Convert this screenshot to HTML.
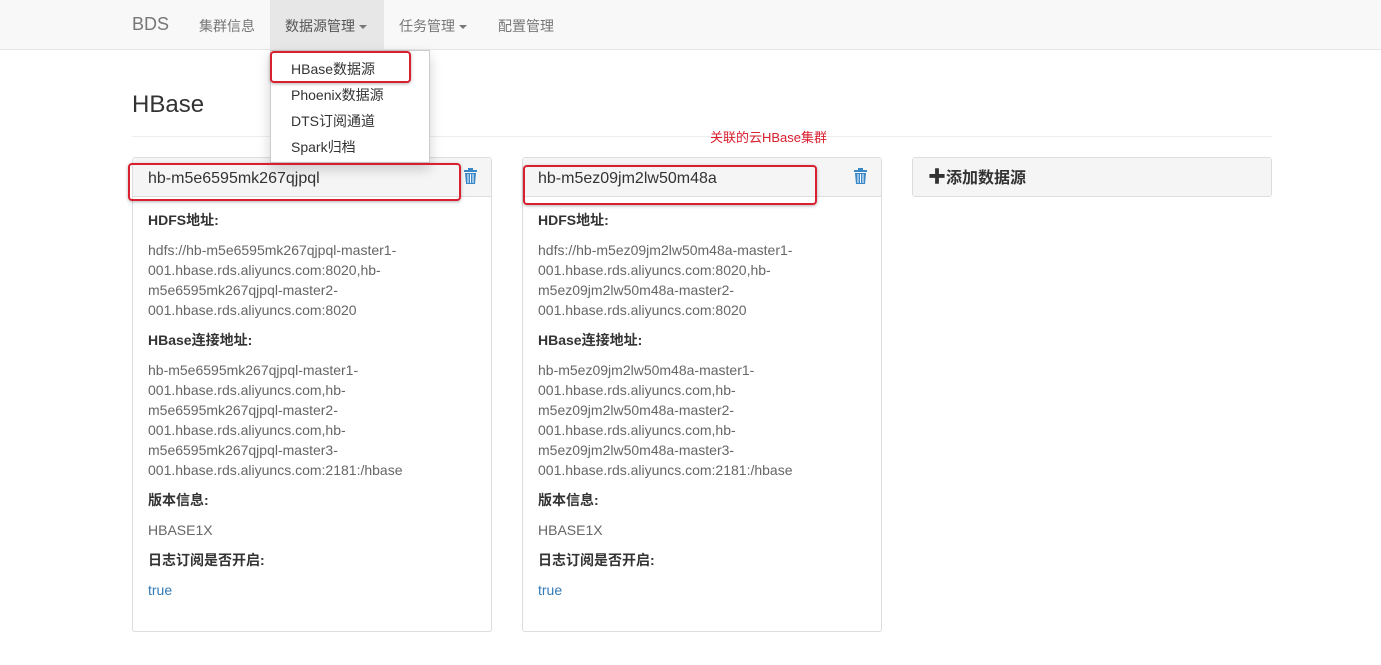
<!DOCTYPE html>
<html><head><meta charset="utf-8"><style>
*{box-sizing:border-box;margin:0;padding:0}
body{width:1381px;height:665px;background:#fff;font-family:"Liberation Sans","Noto Sans CJK SC",sans-serif;font-size:14px;color:#333;position:relative;overflow:hidden}
.nav{position:absolute;left:0;top:0;width:1381px;height:50px;background:#f8f8f8;border-bottom:1px solid #e7e7e7}
.nav span{position:absolute;top:16px;color:#777;font-size:14px}
.brand{font-size:18px!important;top:14px!important}
.act{position:absolute;left:270px;top:0;width:114px;height:50px;background:#e7e7e7}
.caret{display:inline-block;width:0;height:0;border-left:4px solid transparent;border-right:4px solid transparent;border-top:4px solid #777;vertical-align:middle;margin-left:4px}
.dd{position:absolute;z-index:10;left:270px;top:50px;width:160px;height:113px;background:#fff;border:1px solid #ccc;box-shadow:0 6px 12px rgba(0,0,0,.18)}
.dd div{position:absolute;left:20px;font-size:14px;color:#333}
h1{position:absolute;left:132px;top:91px;font-size:24px;font-weight:500;color:#333}
.hr{position:absolute;left:132px;top:136px;width:1140px;height:1px;background:#eee}
.panel{position:absolute;top:157px;width:360px;border:1px solid #ddd;border-radius:3px;background:#fff}
.ph{height:39px;background:#f5f5f5;border-bottom:1px solid #ddd;padding:12px 15px 0;font-size:16px;position:relative}
.trash{position:absolute;right:14px;top:10px}
.pb{padding:13px 15px 0;font-size:14px;line-height:20px}
.lb{font-weight:bold;margin-bottom:10px}
.v{color:#666;margin-bottom:10px}
.t{color:#337ab7}
.red{position:absolute;z-index:20;border:2px solid #d9202f;border-radius:4px;box-shadow:0 1px 3px rgba(0,0,0,.3)}
</style></head><body>
<div class="nav">
<div class="act"></div>
<span class="brand" style="left:132px">BDS</span>
<span style="left:199px">集群信息</span>
<span style="left:285px;color:#555">数据源管理<i class="caret"></i></span>
<span style="left:399px">任务管理<i class="caret"></i></span>
<span style="left:498px">配置管理</span>
</div>
<div class="dd">
<div style="top:8px">HBase数据源</div>
<div style="top:34px">Phoenix数据源</div>
<div style="top:60px">DTS订阅通道</div>
<div style="top:86px">Spark归档</div>
</div>
<h1>HBase</h1>
<div class="hr"></div>
<div style="position:absolute;left:710px;top:127px;color:#d9202f;font-size:13px">关联的云HBase集群</div>
<div class="panel" style="left:132px;height:475px">
<div class="ph">hb-m5e6595mk267qjpql<svg class="trash" width="13" height="16" viewBox="0 0 13 16"><rect x="0" y="2" width="13" height="2" fill="#3a87c8"/><rect x="4" y="0" width="5" height="2" fill="#3a87c8"/><path d="M1 5h11l-1 11H2z" fill="#3a87c8"/><path d="M4 6v9M6.5 6v9M9 6v9" stroke="#fff" stroke-width="1"/></svg></div>
<div class="pb">
<div class="lb">HDFS地址:</div>
<div class="v">hdfs://hb-m5e6595mk267qjpql-master1-<br>001.hbase.rds.aliyuncs.com:8020,hb-<br>m5e6595mk267qjpql-master2-<br>001.hbase.rds.aliyuncs.com:8020</div>
<div class="lb">HBase连接地址:</div>
<div class="v">hb-m5e6595mk267qjpql-master1-<br>001.hbase.rds.aliyuncs.com,hb-<br>m5e6595mk267qjpql-master2-<br>001.hbase.rds.aliyuncs.com,hb-<br>m5e6595mk267qjpql-master3-<br>001.hbase.rds.aliyuncs.com:2181:/hbase</div>
<div class="lb">版本信息:</div>
<div class="v">HBASE1X</div>
<div class="lb">日志订阅是否开启:</div>
<div class="t">true</div>
</div></div>
<div class="panel" style="left:522px;height:475px">
<div class="ph">hb-m5ez09jm2lw50m48a<svg class="trash" width="13" height="16" viewBox="0 0 13 16"><rect x="0" y="2" width="13" height="2" fill="#3a87c8"/><rect x="4" y="0" width="5" height="2" fill="#3a87c8"/><path d="M1 5h11l-1 11H2z" fill="#3a87c8"/><path d="M4 6v9M6.5 6v9M9 6v9" stroke="#fff" stroke-width="1"/></svg></div>
<div class="pb">
<div class="lb">HDFS地址:</div>
<div class="v">hdfs://hb-m5ez09jm2lw50m48a-master1-<br>001.hbase.rds.aliyuncs.com:8020,hb-<br>m5ez09jm2lw50m48a-master2-<br>001.hbase.rds.aliyuncs.com:8020</div>
<div class="lb">HBase连接地址:</div>
<div class="v">hb-m5ez09jm2lw50m48a-master1-<br>001.hbase.rds.aliyuncs.com,hb-<br>m5ez09jm2lw50m48a-master2-<br>001.hbase.rds.aliyuncs.com,hb-<br>m5ez09jm2lw50m48a-master3-<br>001.hbase.rds.aliyuncs.com:2181:/hbase</div>
<div class="lb">版本信息:</div>
<div class="v">HBASE1X</div>
<div class="lb">日志订阅是否开启:</div>
<div class="t">true</div>
</div></div>
<div class="panel" style="left:912px;height:40px">
<div class="ph" style="border-bottom:none;font-weight:bold;padding:5px 15px 0;height:38px"><span style="font-size:18px">✚</span>添加数据源</div>
</div>
<div class="red" style="left:270px;top:51px;width:141px;height:32px"></div>
<div class="red" style="left:128px;top:163px;width:333px;height:38px"></div>
<div class="red" style="left:523px;top:165px;width:294px;height:40px"></div>
</body></html>
